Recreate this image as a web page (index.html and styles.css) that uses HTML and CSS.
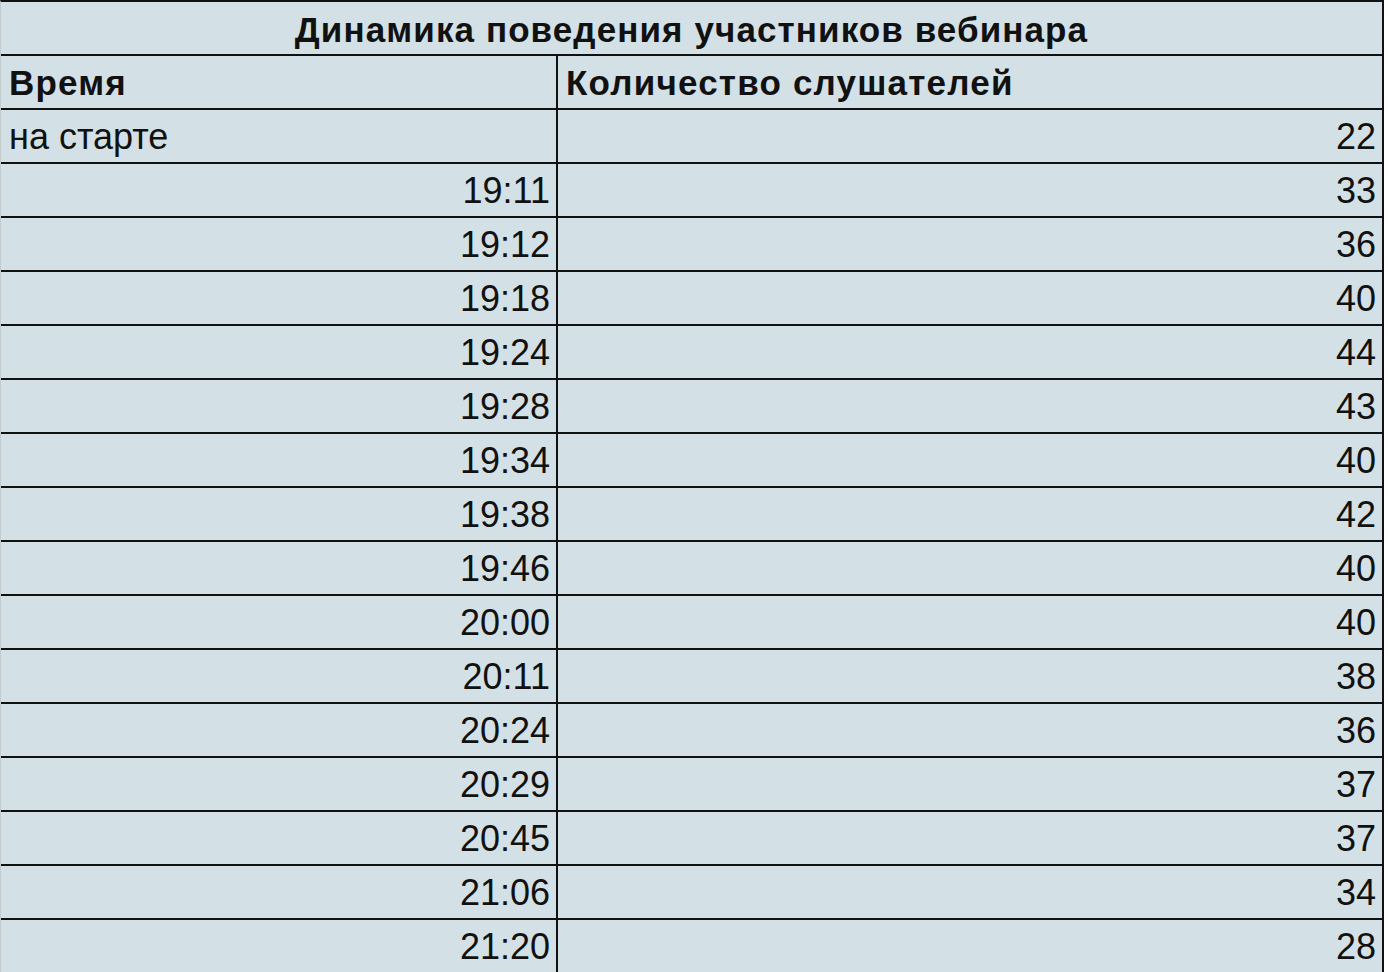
FILE: index.html
```html
<!DOCTYPE html>
<html lang="ru">
<head>
<meta charset="utf-8">
<title>Динамика поведения участников вебинара</title>
<link rel="stylesheet" href="styles.css">
</head>
<body>
<div class="sheet">
  <div class="title">Динамика поведения участников вебинара</div>
  <div class="row head">
    <div class="cell left">Время</div>
    <div class="cell">Количество слушателей</div>
  </div>
  <div class="row">
    <div class="cell left">на старте</div>
    <div class="cell num">22</div>
  </div>
  <div class="row"><div class="cell left num">19:11</div><div class="cell num">33</div></div>
  <div class="row"><div class="cell left num">19:12</div><div class="cell num">36</div></div>
  <div class="row"><div class="cell left num">19:18</div><div class="cell num">40</div></div>
  <div class="row"><div class="cell left num">19:24</div><div class="cell num">44</div></div>
  <div class="row"><div class="cell left num">19:28</div><div class="cell num">43</div></div>
  <div class="row"><div class="cell left num">19:34</div><div class="cell num">40</div></div>
  <div class="row"><div class="cell left num">19:38</div><div class="cell num">42</div></div>
  <div class="row"><div class="cell left num">19:46</div><div class="cell num">40</div></div>
  <div class="row"><div class="cell left num">20:00</div><div class="cell num">40</div></div>
  <div class="row"><div class="cell left num">20:11</div><div class="cell num">38</div></div>
  <div class="row"><div class="cell left num">20:24</div><div class="cell num">36</div></div>
  <div class="row"><div class="cell left num">20:29</div><div class="cell num">37</div></div>
  <div class="row"><div class="cell left num">20:45</div><div class="cell num">37</div></div>
  <div class="row"><div class="cell left num">21:06</div><div class="cell num">34</div></div>
  <div class="row"><div class="cell left num">21:20</div><div class="cell num">28</div></div>
</div>
</body>
</html>
```
FILE: styles.css
```css
html, body {
  margin: 0;
  padding: 0;
  background: #ffffff;
}
body {
  overflow: hidden;
  height: 972px;
}
.sheet {
  width: 1381px;
  background: #d3e0e5;
  border-top: 2px solid #111;
  border-right: 2px solid #111;
  border-left: 1px solid #c4cbcd;
  font-family: "Liberation Sans", Arial, sans-serif;
  color: #111;
}
.title {
  box-sizing: border-box;
  height: 54px;
  line-height: 52px;
  padding-top: 2px;
  border-bottom: 2px solid #111;
  text-align: center;
  font-weight: bold;
  font-size: 35px;
  letter-spacing: 1.1px;
  white-space: nowrap;
}
.row {
  display: grid;
  grid-template-columns: 557px 1fr;
  height: 54px;
  box-sizing: border-box;
  border-bottom: 2px solid #111;
}
.cell {
  font-size: 36px;
  line-height: 52px;
  padding: 1px 6px 0 8px;
  white-space: nowrap;
  overflow: hidden;
}
.left {
  border-right: 2px solid #111;
  padding-right: 6px;
}
.head .cell {
  font-weight: bold;
  font-size: 35px;
  letter-spacing: 1.2px;
}
.num {
  text-align: right;
}
```
